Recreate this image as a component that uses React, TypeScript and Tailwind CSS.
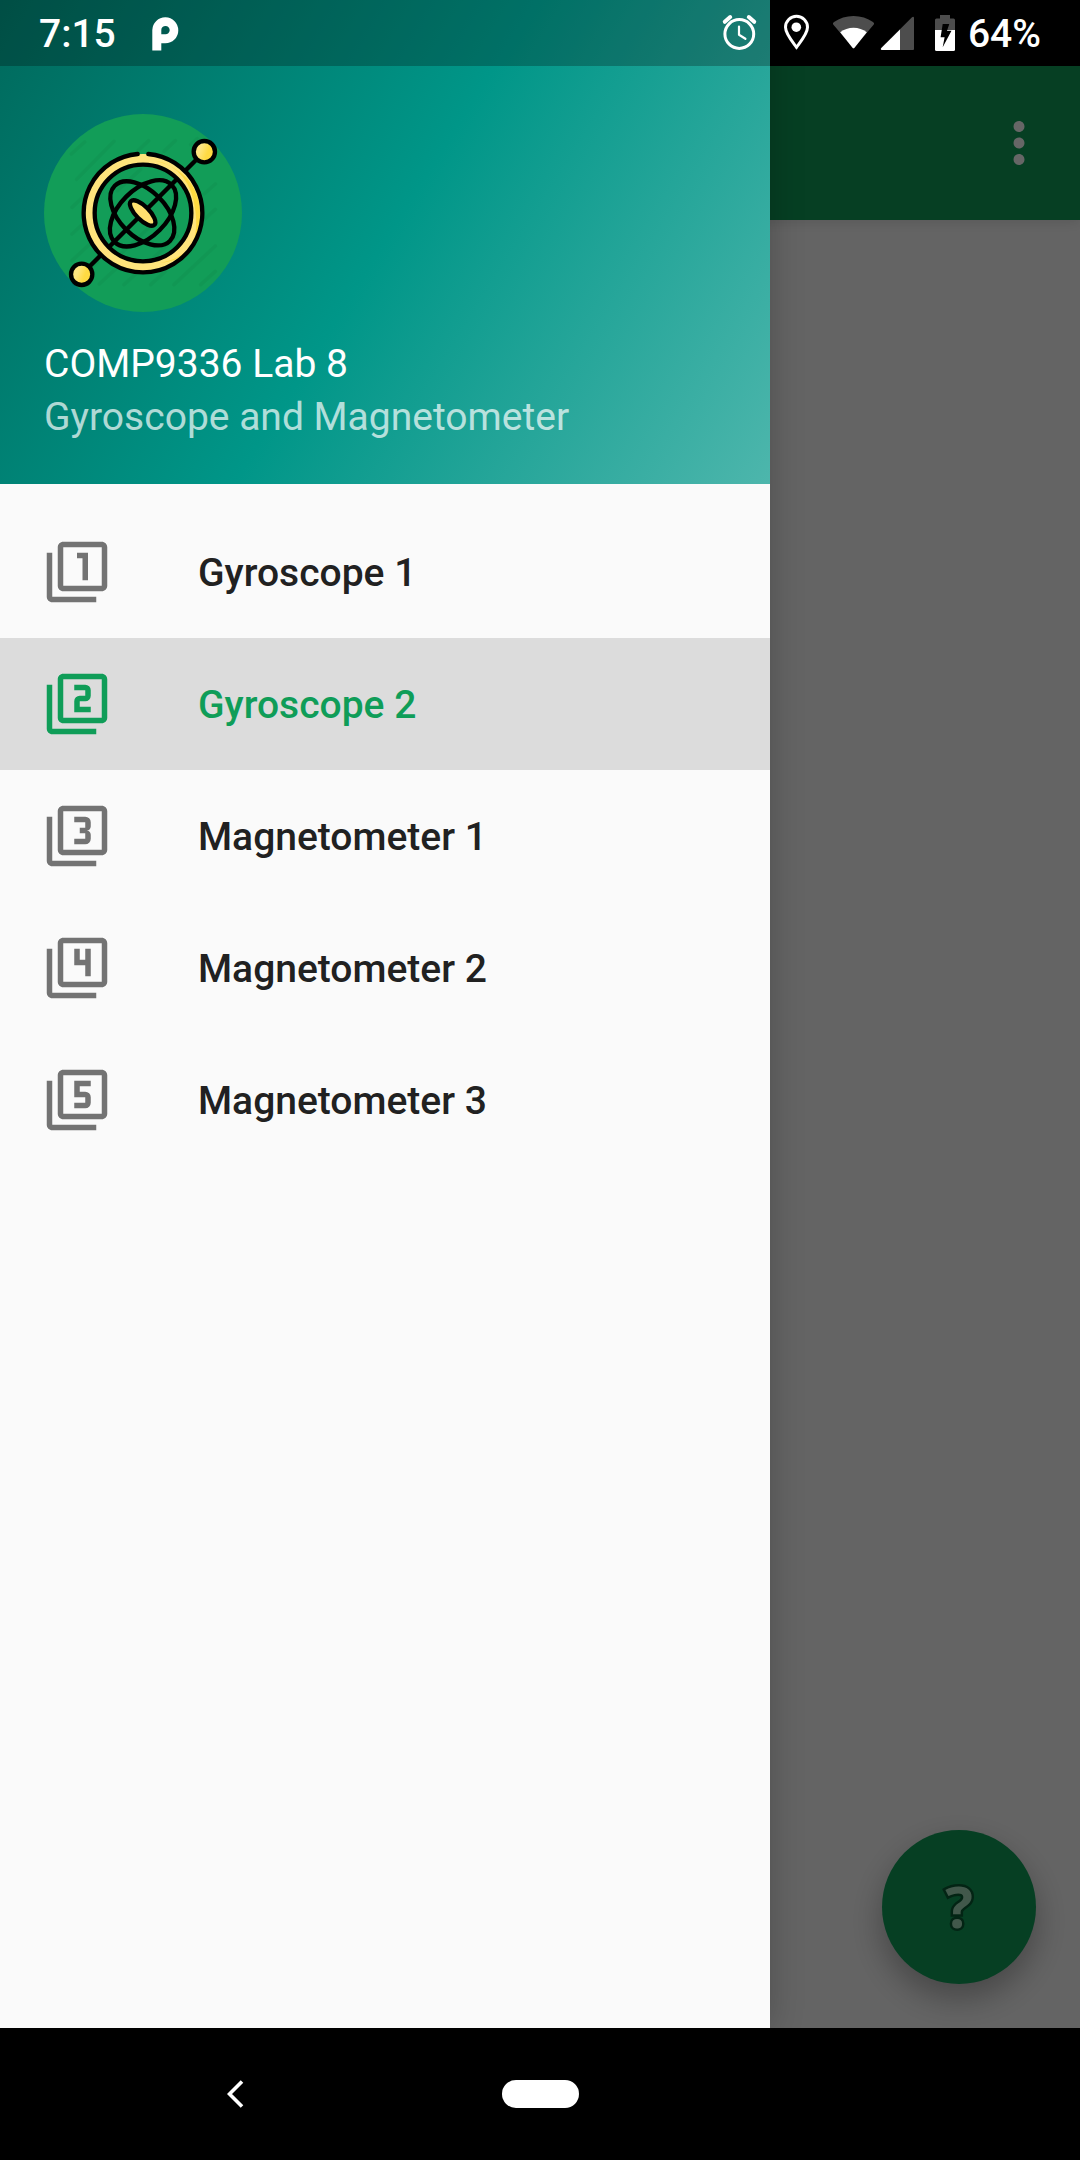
import React from "react";
import {
  MdFilter1,
  MdFilter2,
  MdFilter3,
  MdFilter4,
  MdFilter5,
  MdMoreVert,
} from "react-icons/md";

const menu = [
  { label: "Gyroscope 1", Icon: MdFilter1 },
  { label: "Gyroscope 2", Icon: MdFilter2, active: true },
  { label: "Magnetometer 1", Icon: MdFilter3 },
  { label: "Magnetometer 2", Icon: MdFilter4 },
  { label: "Magnetometer 3", Icon: MdFilter5 },
];

function ParkingIcon() {
  return (
    <svg className="h-[66px] w-[30px]" viewBox="149 0 30 66" aria-hidden="true">
      <path
        fill="#fff"
        fillRule="evenodd"
        d="M151.3 50.6V30a13 13 0 1 1 13 13.3h-4v7.3zM160.3 34.3h4a4.2 4.2 0 1 0-4-4.2z"
      />
    </svg>
  );
}

function AlarmIcon() {
  return (
    <svg
      className="h-[66px] w-[57px]"
      viewBox="711 0 57 66"
      fill="none"
      stroke="#fff"
      strokeLinecap="round"
      aria-hidden="true"
    >
      <circle cx="739.3" cy="34" r="14.4" strokeWidth="3" />
      <path d="M739 26.5v8.3l6.4 4" strokeWidth="2.2" strokeLinejoin="round" />
      <path d="M724.8 21.800l5.400-4.800M748.800 17l5.400 4.800" strokeWidth="4" />
    </svg>
  );
}

function PinIcon() {
  return (
    <svg className="h-[66px] w-[57px]" viewBox="768 0 57 66" aria-hidden="true">
      <path
        d="M796.5 47.3c-3.6-5-11-13.500-11-20a11 11 0 0 1 22 0c0 6.500-7.400 15-11 20z"
        fill="none"
        stroke="#fff"
        strokeWidth="3"
      />
      <circle cx="796.3" cy="27.2" r="4.800" fill="#fff" />
    </svg>
  );
}

function WifiIcon() {
  return (
    <svg className="h-[66px] w-[55px]" viewBox="825 0 55 66" aria-hidden="true">
      <path
        fill="#4d4d4d"
        d="M853.5 48.500L833.2 24.600q-1-1.500.8-2.600Q842.500 16 853.500 16T873 22q1.800 1.100.8 2.600z"
      />
      <path
        fill="#fff"
        d="M852.500 47.800L840.200 32.200Q846 27.700 853.500 27.700T866.800 32.200L854.500 47.800q-1 1-2 0z"
      />
    </svg>
  );
}

function SignalIcon() {
  return (
    <svg className="h-[66px] w-[44px]" viewBox="880 0 44 66" aria-hidden="true">
      <path fill="#4d4d4d" d="M882 50q-2-.5-.7-2L912 17.200q1.800-1.200 2 .8v31q0 1-1 1z" />
      <path fill="#fff" d="M882 50q-2-.5-.7-2L900 29.500V50z" />
    </svg>
  );
}

function BatteryIcon() {
  return (
    <svg className="h-[66px] w-[44px]" viewBox="924 0 44 66" aria-hidden="true">
      <path fill="#4d4d4d" d="M940 15h10v3.500h3.500q1.500 0 1.500 1.500v10h-20V20q0-1.500 1.500-1.500h3.500z" />
      <path fill="#fff" d="M935 30h20v19.500q0 1.500-1.500 1.500h-17q-1.500 0-1.500-1.500z" />
      <path
        fill="#000"
        d="M942.700 24h6.600l-2.300 6.700h4.500l-8.800 16.600 1.900-10h-4z"
      />
    </svg>
  );
}

function GyroscopeLogo() {
  return (
    <svg
      className="size-[198px]"
      viewBox="0 0 594 594"
      role="img"
      aria-label="Gyroscope logo"
    >
      <defs>
        <linearGradient id="ball" x1="0" y1="0" x2="1" y2="0.4">
          <stop offset="0.4" stopColor="#ffe680" />
          <stop offset="0.75" stopColor="#ffda42" />
        </linearGradient>
      </defs>
      <circle cx="297" cy="297" r="297" fill="#129d58" />
      <g stroke="#000" strokeOpacity="0.035" strokeWidth="11" strokeLinecap="round">
        <path d="M82 120l40-36M98 196L210 82M280 112l34-32M360 112l34-32M440 92l20-18M84 280l36-34M84 360l26-24M84 440l60-56M90 510l70-66M166 510l50-46M240 512l40-36M320 512l44-40M390 512l124-116M470 512l44-40M454 340l60-54M480 240l34-30M220 230l70-64M230 420l90-84M330 430l70-64" />
      </g>
      <g fill="none" stroke="#000" strokeWidth="13" strokeLinecap="round">
        <path d="M138 456L456 138" />
        <circle cx="297" cy="297" r="162" stroke="#ffe47c" strokeWidth="30" />
        <path
          d="M330 139Q440 160 455 297T350 447Q475 420 469 297T330 139z"
          fill="#ffda42"
          stroke="none"
        />
        <path d="M313 120A178 178 0 1 1 281 120" />
        <circle cx="297" cy="297" r="145" />
        <ellipse cx="295" cy="298" rx="117" ry="69" transform="rotate(45 295 298)" />
        <ellipse cx="297" cy="298" rx="121" ry="71" transform="rotate(-45 297 298)" />
        <ellipse
          cx="296"
          cy="297"
          rx="50"
          ry="20"
          fill="#ffe070"
          transform="rotate(45 296 297)"
        />
        <circle cx="481" cy="113" r="32" fill="url(#ball)" />
        <circle cx="113" cy="481" r="32" fill="url(#ball)" />
      </g>
    </svg>
  );
}

function StatusBar() {
  return (
    <div className="z-10 flex h-[66px] items-center justify-between self-start bg-black/25 pr-[39px] pl-[39px] text-[39px] leading-none font-medium text-white [grid-area:1/1]">
      <div className="flex items-center gap-[34px]">
        <span className="pt-[3px]">7:15</span>
        <ParkingIcon />
      </div>
      <div className="flex items-center">
        <AlarmIcon />
        <PinIcon />
        <WifiIcon />
        <SignalIcon />
        <BatteryIcon />
        <span className="pt-[3px]">64%</span>
      </div>
    </div>
  );
}

function Screen() {
  return (
    <div className="flex flex-col bg-[#fafafa] [grid-area:1/1]">
      <div className="h-[66px] bg-black" />
      <header className="flex h-[154px] items-center justify-end bg-[#0f9d58] pr-7 shadow-[0_2px_12px_rgba(0,0,0,0.12)]">
        <button type="button" aria-label="More options" className="text-white">
          <MdMoreVert className="size-[66px]" />
        </button>
      </header>
      <main className="flex flex-1 items-end justify-end p-11">
        <button
          type="button"
          aria-label="Help"
          className="flex size-[154px] items-center justify-center rounded-full bg-[#0f9d58] pb-[3px] font-['Open_Sans'] text-[58px] leading-none font-bold text-[#a6dcbc] shadow-[0_14px_32px_rgba(0,0,0,0.3)] [-webkit-text-stroke:5px_#085a32] [paint-order:stroke_fill]"
        >
          ?
        </button>
      </main>
    </div>
  );
}

function Drawer() {
  return (
    <aside className="flex w-[770px] max-w-full flex-col bg-[#fafafa] shadow-[0_0_32px_rgba(0,0,0,0.22)] [grid-area:1/1]">
      <div className="bg-[linear-gradient(122deg,#00695c,#009688_50%,#4db6ac)] px-11 pt-[114px] pb-10 text-[39px] leading-[53px] text-white">
        <GyroscopeLogo />
        <div className="pt-[26px]">COMP9336 Lab 8</div>
        <div className="text-white/70">Gyroscope and Magnetometer</div>
      </div>
      <nav>
        <ul className="py-[22px]">
          {menu.map(({ label, Icon, active }) => (
            <li key={label}>
              <a
                href="#"
                aria-current={active ? "page" : undefined}
                className={
                  active
                    ? "flex h-[132px] items-center gap-[88px] bg-[#dcdcdc] px-11 text-[#0f9d58]"
                    : "flex h-[132px] items-center gap-[88px] px-11 text-[#212121]"
                }
              >
                <Icon
                  className={
                    active
                      ? "size-[66px] shrink-0 text-[#0f9d58]"
                      : "size-[66px] shrink-0 text-[#737373]"
                  }
                />
                <span className="pt-[3px] text-[39px] leading-[53px] font-medium">{label}</span>
              </a>
            </li>
          ))}
        </ul>
      </nav>
    </aside>
  );
}

function NavigationBar() {
  return (
    <div className="grid h-[132px] grid-cols-[1fr_140px_1fr] place-items-center bg-black">
      <button type="button" aria-label="Back">
        <svg className="h-[28px] w-[17px]" viewBox="0 0 17 28" fill="none">
          <path d="M15 1.500L2.500 14 15 26.500" stroke="#fff" strokeWidth="3.600" />
        </svg>
      </button>
      <button type="button" aria-label="Home" className="h-[28px] w-[77px] rounded-full bg-white" />
    </div>
  );
}

export default function App() {
  return (
    <div className="flex min-h-screen flex-col bg-black font-['Roboto',sans-serif]">
      <div className="grid flex-1 grid-cols-[minmax(0,1fr)] overflow-hidden">
        <Screen />
        <div className="bg-black/60 [grid-area:1/1]" />
        <Drawer />
        <StatusBar />
      </div>
      <NavigationBar />
    </div>
  );
}
